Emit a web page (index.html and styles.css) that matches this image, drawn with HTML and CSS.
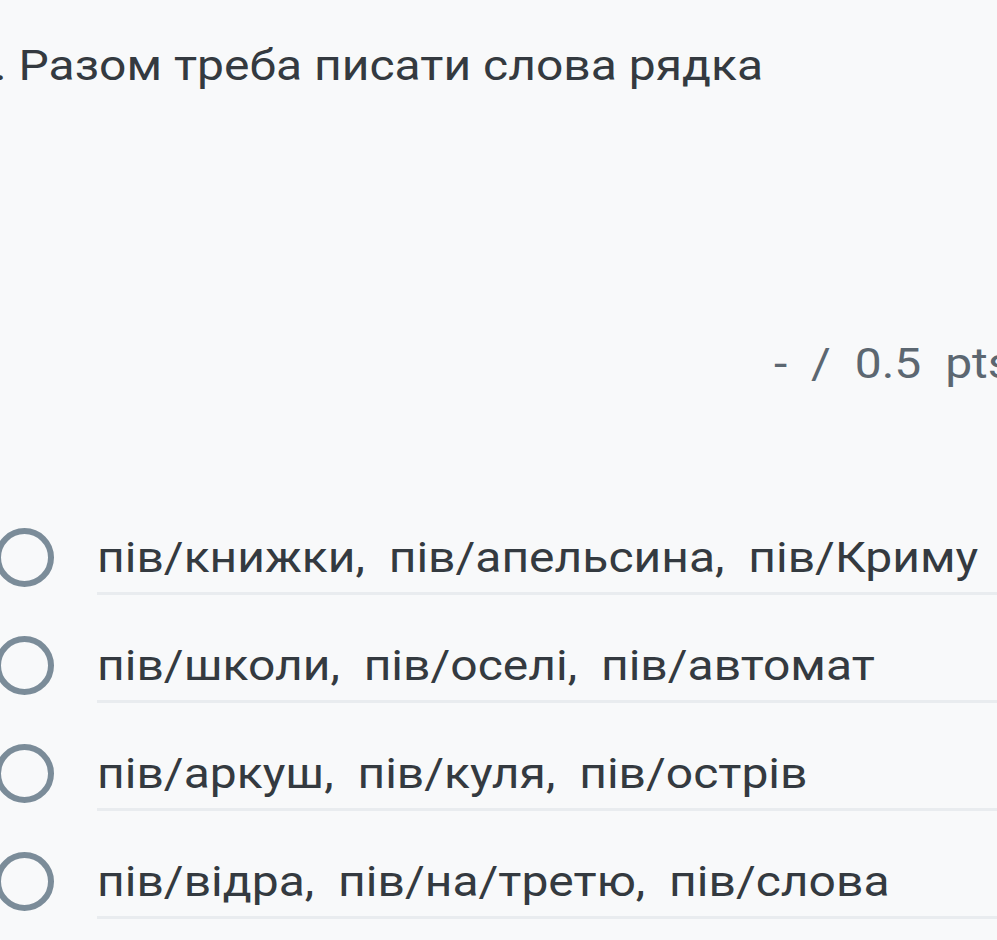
FILE: index.html
```html
<!DOCTYPE html>
<html>
<head>
<meta charset="utf-8">
<link rel="stylesheet" href="styles.css">
</head>
<body>
<div class="page">
  <h1 class="title"><span class="wide">1. Разом треба писати слова рядка</span></h1>
  <div class="points"><span class="wide">-&nbsp; /&nbsp; 0.5&nbsp; pts</span></div>
  <div class="options">
    <label class="option"><span class="radio"></span><span class="text"><span class="wide">пів/книжки,&nbsp; пів/апельсина,&nbsp; пів/Криму</span></span></label>
    <label class="option"><span class="radio"></span><span class="text"><span class="wide">пів/школи,&nbsp; пів/оселі,&nbsp; пів/автомат</span></span></label>
    <label class="option"><span class="radio"></span><span class="text"><span class="wide">пів/аркуш,&nbsp; пів/куля,&nbsp; пів/острів</span></span></label>
    <label class="option"><span class="radio"></span><span class="text"><span class="wide">пів/відра,&nbsp; пів/на/третю,&nbsp; пів/слова</span></span></label>
  </div>
</div>
</body>
</html>
```
FILE: styles.css
```css
html, body {
  margin: 0;
  padding: 0;
  background: #f8f9fa;
  overflow: hidden;
}
.page {
  width: 997px;
  height: 940px;
  overflow: hidden;
  font-family: Roboto, "Noto Sans", sans-serif;
  color: #343a40;
}
.wide {
  display: inline-block;
  transform: scaleX(1.143);
  transform-origin: left center;
  white-space: nowrap;
}
.title {
  margin: 0 0 0 -33px;
  padding-top: 38px;
  font-size: 42px;
  font-weight: 400;
  line-height: 56px;
  white-space: nowrap;
}
.points {
  margin-top: 244px;
  margin-left: 774px;
  font-size: 42px;
  line-height: 52px;
  color: #5c6771;
  white-space: nowrap;
}
.options {
  margin-top: 142px;
  display: flex;
  flex-direction: column;
  gap: 45px;
}
.option {
  display: flex;
  align-items: flex-start;
}
.radio {
  flex: none;
  width: 47px;
  height: 47px;
  border: 6px solid #7b8c99;
  border-radius: 50%;
  margin-left: -5px;
  margin-right: 43px;
  margin-top: -4px;
}
.text {
  flex: 1;
  font-size: 42px;
  line-height: 52px;
  padding-bottom: 8px;
  white-space: nowrap;
  border-bottom: 3px solid #e9ecef;
}
```
